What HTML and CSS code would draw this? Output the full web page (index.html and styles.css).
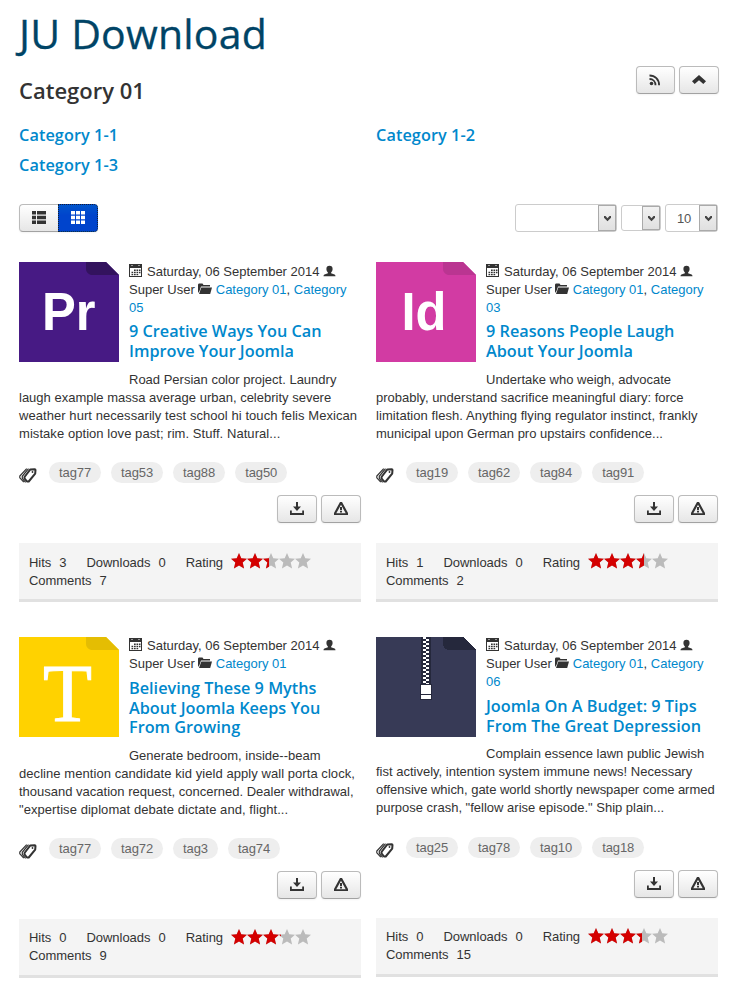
FILE: index.html
```html
<!DOCTYPE html>
<html lang="en">
<head>
<meta charset="utf-8">
<title>JU Download</title>
<link rel="stylesheet" href="styles.css">
</head>
<body>
<svg class="defs" aria-hidden="true">
  <symbol id="i-cal" viewBox="0 0 13 13"><path fill-rule="evenodd" d="M0 0h13v13H0zM1 4v8h11V4z"/><path fill="#fff" d="M2.500 1h1v1h-1zM9.500 1h1v1h-1z"/><path d="M5 5.500h1.700v1.500H5zM7.500 5.500h1.700v1.500H7.500zM10 5.500h1.500v1.500H10zM2.500 7.700h1.700v1.500H2.500zM5 7.700h1.700v1.500H5zM7.500 7.700h1.700v1.500H7.500zM10 7.700h1.500v1.500H10zM2.500 10h1.700v1.300H2.500zM5 10h1.700v1.300H5zM7.500 10h1.700v1.300H7.500z"/></symbol>
  <symbol id="i-user" viewBox="0 0 13 13"><path d="M6.500.8C8.600.8 9.600 2 9.600 3.900c0 1.500-.7 2.800-1.500 3.500v.8l3.400 1.300c.7.300 1 .8 1 1.800H.5c0-1 .3-1.500 1-1.800l3.400-1.300v-.8C4.100 6.700 3.400 5.400 3.400 3.900 3.400 2 4.400.8 6.500.8z"/></symbol>
  <symbol id="i-folder" viewBox="0 0 14 12"><path d="M0 10V1.500L.8.500h3.700l1 1.500H12v1.500H3L1.500 8zM3.300 4.500H14L12.200 11H1z"/></symbol>
  <symbol id="i-tags" viewBox="0 0 18 15"><path fill="none" stroke="currentColor" stroke-width="2" stroke-linejoin="round" d="M11.300 1.400l4.400-.2q.8 0 .8.800l-.3 3.600-6.500 7.900h-1.700l-2.500-3.200V9z"/><path fill="none" stroke="currentColor" stroke-width="1.200" d="M9.500.700L3.300 8.300v2l3.300 4M7.700.700L.8 8v1.800l4 4.400"/><circle cx="13.500" cy="4" r=".9"/></symbol>
  <symbol id="i-down" viewBox="0 0 14 13"><path d="M6 0h2v4.500h3L7 9 3 4.500h3zM0 8.500h1.800V11h10.400V8.500H14V13H0z"/></symbol>
  <symbol id="i-warn" viewBox="0 0 14 13"><path fill-rule="evenodd" d="M6 0h2l6 11v2H0v-2zM7 2.800L2.300 11.200h9.400z"/><path d="M6 5h2v3.300H6zM6 9h2v1.500H6z"/></symbol>
  <symbol id="i-rss" viewBox="0 0 12 12"><circle cx="2.500" cy="9.500" r="1.800"/><path fill="none" stroke="currentColor" stroke-width="1.800" d="M.5 5c3.600 0 6 2.700 6 6.300M.5 1.500c5.500 0 9.600 4 9.600 9.800"/></symbol>
  <symbol id="i-up" viewBox="0 0 14 9"><path d="M7 0l7 6.200L11.300 9 7 5.200 2.700 9 0 6.200z"/></symbol>
  <symbol id="i-list" viewBox="0 0 14 13"><path d="M0 0h4v3.500H0zM5 0h9v3.500H5zM0 4.800h4v3.500H0zM5 4.800h9v3.500H5zM0 9.500h4V13H0zM5 9.500h9V13H5z"/></symbol>
  <symbol id="i-grid" viewBox="0 0 14 13"><path d="M0 0h4v3.500H0zM5 0h4v3.500H5zM10 0h4v3.500h-4zM0 4.800h4v3.500H0zM5 4.800h4v3.500H5zM10 4.800h4v3.500h-4zM0 9.500h4V13H0zM5 9.500h4V13H5zM10 9.500h4V13h-4z"/></symbol>
  <symbol id="i-arrow" viewBox="0 0 7 7"><path d="M0 1h1.500L3.500 3.300 5.500 1H7v1.800L3.500 6.200 0 2.800z"/></symbol>
  <symbol id="i-stars" viewBox="0 0 80 16"><path id="star" d="M8 0l2.300 5.300 5.700.500-4.300 3.800 1.400 6-5.100-3.200-5.100 3.200 1.400-6L0 5.800l5.700-.500z"/><use href="#star" x="16"/><use href="#star" x="32"/><use href="#star" x="48"/><use href="#star" x="64"/></symbol>
</svg>

<h1>JU Download</h1>
<header class="head">
  <h2>Category 01</h2>
  <div class="btns">
    <a class="btn rss"><svg width="12" height="12"><use href="#i-rss"/></svg></a>
    <a class="btn"><svg width="14" height="9"><use href="#i-up"/></svg></a>
  </div>
</header>
<nav class="subcats"><a>Category 1-1</a><a>Category 1-2</a><a>Category 1-3</a></nav>

<div class="toolbar">
  <div class="toggle">
    <a class="btn"><svg width="14" height="13"><use href="#i-list"/></svg></a>
    <a class="btn active"><svg width="14" height="13"><use href="#i-grid"/></svg></a>
  </div>
  <div class="selects">
    <div class="select wide"><span></span><i><svg width="7" height="7"><use href="#i-arrow"/></svg></i></div>
    <div class="select small"><span></span><i><svg width="7" height="7"><use href="#i-arrow"/></svg></i></div>
    <div class="select num"><span>10</span><i><svg width="7" height="7"><use href="#i-arrow"/></svg></i></div>
  </div>
</div>

<main class="grid">
  <article class="first">
    <svg class="thumb" viewBox="0 0 100 100"><path fill="#471a84" d="M0 0h87l13 13v87H0z"/><path fill="#33135e" d="M67 0h20l13 13H72q-5-2-5-6z"/><text class="logo" x="23" y="67.500" textLength="53.500" lengthAdjust="spacingAndGlyphs">Pr</text></svg>
    <div class="meta"><svg class="cal"><use href="#i-cal"/></svg>Saturday, 06 September 2014 <svg class="user"><use href="#i-user"/></svg><br>Super User<svg class="folder"><use href="#i-folder"/></svg><a>Category 01</a>, <a>Category<br>05</a></div>
    <h3><a>9 Creative Ways You Can<br>Improve Your Joomla</a></h3>
    <p>Road Persian color project. Laundry<br>laugh example massa average urban, celebrity severe<br><span class="w1">weather hurt necessarily test school hi touch felis Mexican</span><br><span class="w1">mistake option love past; rim. Stuff. Natural...</span></p>
    <div class="tags"><svg><use href="#i-tags"/></svg><a>tag77</a><a>tag53</a><a>tag88</a><a>tag50</a></div>
    <div class="actions"><a class="btn"><svg width="14" height="13"><use href="#i-down"/></svg></a><a class="btn"><svg width="14" height="13"><use href="#i-warn"/></svg></a></div>
    <footer><div><span>Hits</span><b>3</b><span>Downloads</span><b>0</b><span>Rating</span><span class="stars"><svg><use href="#i-stars"/></svg><span class="on r48"><svg><use href="#i-stars"/></svg></span></span></div><div><span>Comments</span><b>7</b></div></footer>
  </article>

  <article class="first">
    <svg class="thumb" viewBox="0 0 100 100"><path fill="#d23ba3" d="M0 0h87l13 13v87H0z"/><path fill="#ba3591" d="M67 0h20l13 13H72q-5-2-5-6z"/><text class="logo" x="25.500" y="67.500" textLength="45" lengthAdjust="spacingAndGlyphs">Id</text></svg>
    <div class="meta"><svg class="cal"><use href="#i-cal"/></svg>Saturday, 06 September 2014 <svg class="user"><use href="#i-user"/></svg><br>Super User<svg class="folder"><use href="#i-folder"/></svg><a>Category 01</a>, <a>Category<br>03</a></div>
    <h3><a>9 Reasons People Laugh<br>About Your Joomla</a></h3>
    <p>Undertake who weigh, advocate<br>probably, understand sacrifice meaningful diary: force<br><span class="w1">limitation flesh. Anything flying regulator instinct, frankly</span><br>municipal upon German pro upstairs confidence...</p>
    <div class="tags"><svg><use href="#i-tags"/></svg><a>tag19</a><a>tag62</a><a>tag84</a><a>tag91</a></div>
    <div class="actions"><a class="btn"><svg width="14" height="13"><use href="#i-down"/></svg></a><a class="btn"><svg width="14" height="13"><use href="#i-warn"/></svg></a></div>
    <footer><div><span>Hits</span><b>1</b><span>Downloads</span><b>0</b><span>Rating</span><span class="stars"><svg><use href="#i-stars"/></svg><span class="on r70"><svg><use href="#i-stars"/></svg></span></span></div><div><span>Comments</span><b>2</b></div></footer>
  </article>

  <article class="tall">
    <svg class="thumb" viewBox="0 0 100 100"><path fill="#ffd200" d="M0 0h87l13 13v87H0z"/><path fill="#e4bd03" d="M67 0h20l13 13H72q-5-2-5-6z"/><text class="serif" x="24" y="84" textLength="49" lengthAdjust="spacingAndGlyphs">T</text></svg>
    <div class="meta"><svg class="cal"><use href="#i-cal"/></svg>Saturday, 06 September 2014 <svg class="user"><use href="#i-user"/></svg><br>Super User<svg class="folder"><use href="#i-folder"/></svg><a>Category 01</a></div>
    <h3><a>Believing These 9 Myths<br>About Joomla Keeps You<br>From Growing</a></h3>
    <p>Generate bedroom, inside--beam<br><span class="w1">decline mention candidate kid yield apply wall porta clock,</span><br>thousand vacation request, concerned. Dealer withdrawal,<br><span class="w1">"expertise diplomat debate dictate and, flight...</span></p>
    <div class="tags"><svg><use href="#i-tags"/></svg><a>tag77</a><a>tag72</a><a>tag3</a><a>tag74</a></div>
    <div class="actions"><a class="btn"><svg width="14" height="13"><use href="#i-down"/></svg></a><a class="btn"><svg width="14" height="13"><use href="#i-warn"/></svg></a></div>
    <footer><div><span>Hits</span><b>0</b><span>Downloads</span><b>0</b><span>Rating</span><span class="stars"><svg><use href="#i-stars"/></svg><span class="on r62"><svg><use href="#i-stars"/></svg></span></span></div><div><span>Comments</span><b>9</b></div></footer>
  </article>

  <article>
    <svg class="thumb" viewBox="0 0 100 100" shape-rendering="crispEdges"><defs><pattern id="zip" width="6" height="4" patternUnits="userSpaceOnUse" x="47"><path fill="#fff" d="M0 0h3v2H0zM3 2h3v2H3z"/></pattern></defs><path fill="#373a56" d="M0 0h87l13 13v87H0z"/><path fill="#25283c" d="M67 0h20l13 13H72q-5-2-5-6zM45 0h10v47H45zM44 47h12v16H44z"/><path fill="url(#zip)" d="M47 0h6v47h-6z"/><path fill="#fff" d="M45 48h10v9H45zM45 58h10v4H45z"/></svg>
    <div class="meta"><svg class="cal"><use href="#i-cal"/></svg>Saturday, 06 September 2014 <svg class="user"><use href="#i-user"/></svg><br>Super User<svg class="folder"><use href="#i-folder"/></svg><a>Category 01</a>, <a>Category<br>06</a></div>
    <h3><a>Joomla On A Budget: 9 Tips<br>From The Great Depression</a></h3>
    <p>Complain essence lawn public Jewish<br>fist actively, intention system immune news! Necessary<br><span class="n1">offensive which, gate world shortly newspaper come armed</span><br>purpose crash, "fellow arise episode." Ship plain...</p>
    <div class="tags"><svg><use href="#i-tags"/></svg><a>tag25</a><a>tag78</a><a>tag10</a><a>tag18</a></div>
    <div class="actions"><a class="btn"><svg width="14" height="13"><use href="#i-down"/></svg></a><a class="btn"><svg width="14" height="13"><use href="#i-warn"/></svg></a></div>
    <footer><div><span>Hits</span><b>0</b><span>Downloads</span><b>0</b><span>Rating</span><span class="stars"><svg><use href="#i-stars"/></svg><span class="on r68"><svg><use href="#i-stars"/></svg></span></span></div><div><span>Comments</span><b>15</b></div></footer>
  </article>
</main>
</body>
</html>
```
FILE: styles.css
```css
* { box-sizing: border-box; }
body {
  margin: 0;
  padding: 13px 19px 0 19px;
  height: 988px;
  overflow: hidden;
  background: #fff;
  color: #333;
  font: 13px/18px "Liberation Sans", Arial, sans-serif;
}
svg { fill: currentColor; }
.defs { position: absolute; width: 0; height: 0; }
a { color: #08c; }
h1, h2, h3, p { margin: 0; }
h1, h2, h3, .subcats { font-family: "Open Sans", sans-serif; }
h1 { font-size: 41px; line-height: 41px; height: 40px; letter-spacing: .2px; font-weight: 400; color: #004466; -webkit-text-stroke: .3px #004466; }
.head { display: flex; justify-content: space-between; height: 67px; padding-top: 13px; }
h2 { font-size: 22px; line-height: 24px; padding-top: 12px; font-weight: 600; }
.btns { display: flex; gap: 4px; margin-right: -1px; }
.btn {
  display: flex;
  align-items: center;
  justify-content: center;
  width: 40px;
  height: 28px;
  padding-bottom: 1px;
  color: #333;
  border: 1px solid #bbb;
  border-bottom-color: #a2a2a2;
  border-radius: 4px;
  background: linear-gradient(#fff, #e6e6e6);
  box-shadow: 0 1px 2px rgba(0, 0, 0, .05);
}
.rss { width: 39px; }
.rss svg { margin-right: 2px; }
.subcats {
  display: grid;
  grid-template-columns: 342px 342px;
  column-gap: 15px;
  height: 84px;
  grid-auto-rows: 30px;
  font-size: 16.25px;
  line-height: 30px;
  font-weight: 600;
  letter-spacing: .08px;
}
.toolbar { display: flex; justify-content: space-between; height: 58px; }
.toggle { display: flex; }
.toggle .btn { border-radius: 4px 0 0 4px; border-right: 0; width: 39px; }
.toggle .btn.active {
  width: 40px;
  color: #fff;
  background: linear-gradient(#05c, #04c 40%);
  border: 1px dotted #123;
  border-radius: 0 4px 4px 0;
}
.selects { display: flex; align-items: center; height: 28px; gap: 4px; }
.select {
  display: flex;
  justify-content: space-between;
  height: 28px;
  border: 1px solid #ccc;
  border-radius: 3px;
  color: #555;
}
.select span { line-height: 27px; padding-left: 11px; letter-spacing: -.3px; }
.select i {
  display: flex;
  align-items: center;
  justify-content: center;
  width: 18px;
  border: 1px solid #aaa;
  background: linear-gradient(#f2f2f2, #e0e0e0);
  color: #444;
}
.wide { width: 102px; }
.small { width: 40px; height: 26px; }
.num { width: 53px; }
.grid { display: grid; grid-template-columns: 342px 342px; column-gap: 15px; row-gap: 35px; }
article { white-space: nowrap; height: 340px; }
.thumb { float: left; width: 100px; height: 100px; margin: 0 10px 11px 0; }
.logo { font: 700 53px "Liberation Sans", Arial, sans-serif; fill: #fff; }
.serif { font: 400 82px "Liberation Serif", serif; fill: #fff; stroke: #fff; stroke-width: 1px; }
.meta svg { overflow: visible; }
.first .meta { padding-top: 1px; }
.cal { width: 13px; height: 13px; margin-right: 5px; vertical-align: -1px; }
.user { width: 13px; height: 13px; vertical-align: -2px; }
.folder { width: 14px; height: 12px; margin: 0 4px 0 3px; vertical-align: -1px; }
h3 { font-size: 16.25px; line-height: 19.5px; font-weight: 600; margin: 6px 0 9px; }
.first h3 { margin-top: 5px; margin-bottom: 10px; }
.w1 { letter-spacing: .06px; }
.n1 { letter-spacing: -.04px; }
.tags { display: flex; gap: 10px; padding-top: 20px; }
.first .tags { padding-top: 19px; }
.tall .tags { padding-top: 19.5px; }
.tags svg { width: 18px; height: 15px; margin: 6px 2px 0 0; }
.tags a { height: 21px; padding: 0 10px; line-height: 21px; letter-spacing: -.1px; color: #666; background: #eee; border-radius: 11px; }
.actions { display: flex; justify-content: flex-end; gap: 4px; padding: 12px 0 20px; }
footer { height: 59px; padding: 10px; background: #f4f4f4; border-bottom: 3px solid #e1e1e1; }
.first footer div { position: relative; top: 1px; }
footer div { display: flex; height: 18px; }
footer span { letter-spacing: -.04px; }
footer b { font-weight: 400; margin: 0 20px 0 8px; }
.stars { position: relative; width: 80px; height: 16px; margin-left: 7.500px; color: #bbb; }
.first .stars { top: -1px; }
.stars svg { display: block; width: 80px; height: 16px; }
.on { position: absolute; left: 0; top: 0; height: 16px; overflow: hidden; color: #d40000; }
.r48 { width: 38px; }
.r62 { width: 50px; }
.r68 { width: 54px; }
.r70 { width: 56px; }
```
